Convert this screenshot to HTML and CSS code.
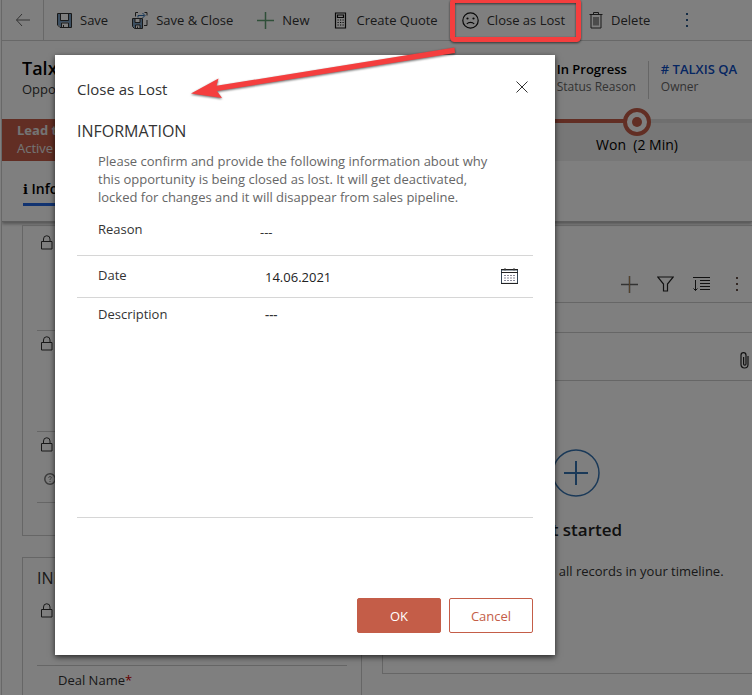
FILE: index.html
```html
<!DOCTYPE html>
<html lang="en">
<head>
<meta charset="utf-8">
<meta name="viewport" content="width=device-width, initial-scale=1">
<title>Close as Lost</title>
<link rel="stylesheet" href="styles.css">
</head>
<body>
<svg class="sprite" aria-hidden="true">
  <symbol id="lock" viewBox="0 0 12 15">
    <path d="M.5 6.500h10.500v7.500H.5zM2.500 6.500V4a3.250 3.250 0 0 1 6.500 0v2.500" fill="none" stroke="currentColor"/>
  </symbol>
</svg>

<div class="app">
  <header class="top">
    <nav class="toolbar" aria-label="Commands">
      <button class="back" type="button" aria-label="Back">
        <svg width="16" height="14" viewBox="0 0 16 14"><path d="M15 7H1.500M7 1 1.500 7 7 13" fill="none" stroke="#666"/></svg>
      </button>
      <button class="cmd" type="button">
        <svg width="15" height="15" viewBox="0 0 15 15"><path d="M1 1h13v13H3.500L1 11.500z" fill="#7ba0c4"/><path d="M3.500 1h8v6h-8z" fill="#fff"/><path d="M4.500 9.500h7V14h-7z" fill="#fff"/><path d="M.5.5h14v14H3L.5 12zM3.500 1v6.500h8V1M4.500 14v-4h7v4M6.500 12v2" fill="none" stroke="#333"/></svg>
        Save
      </button>
      <button class="cmd" type="button">
        <svg width="16" height="17" viewBox="0 0 16 17"><path d="M1 6.500h9V16H2.500L1 14.500z" fill="#7ba0c4"/><path d="M3 7h5v3H3zM3.500 13H8v3H3.500z" fill="#fff"/><path d="M.5 6.500h10v10h-8l-2-2zM3 7v3.500h5V7M3.500 16v-3h4.500v3M5.500 14.500V16" fill="none" stroke="#333"/><path d="M3.500 4.500v-4h2.500M12.500.5h2.500v3M15 8v5.500h-3" fill="none" stroke="#333"/><path d="M6 5.500V3.500h6.500M10.500 1l2.500 2.500L10.500 6" fill="none" stroke="#2b6cb0"/></svg>
        Save &amp; Close
      </button>
      <button class="cmd" type="button">
        <svg width="17" height="17" viewBox="0 0 17 17"><path d="M8.500 0v17M0 8.500h17" stroke="#5f9f72" stroke-width="1.500"/></svg>
        New
      </button>
      <button class="cmd" type="button">
        <svg width="15" height="17" viewBox="0 0 15 17"><path d="M2.500 1h10v15h-10zM4.500 3h6v2.500h-6z" fill="none" stroke="#111" stroke-width="1.200"/><path d="M4.500 8h6.500M4.500 10.500h6.500M4.500 13h6.500" stroke="#111" stroke-width="1.200" stroke-dasharray="1.200 1.300"/></svg>
        Create Quote
      </button>
      <button class="cmd" type="button">
        <svg width="17" height="17" viewBox="0 0 17 17"><circle cx="8.500" cy="8.500" r="7.700" fill="none" stroke="#111" stroke-width="1.200"/><path d="M4.800 12c1.800-2.300 5.600-2.300 7.400 0" fill="none" stroke="#111" stroke-width="1.200"/><circle cx="5.500" cy="6.500" r="1.100" fill="#111"/><circle cx="11.500" cy="6.500" r="1.100" fill="#111"/></svg>
        Close as Lost
      </button>
      <button class="cmd" type="button">
        <svg width="14" height="17" viewBox="0 0 14 17"><path d="M.5 2.500h13M4.500 2.500V.5h5v2M2 2.500v13.500h10V2.500M5 5v8.500M7 5v8.500M9 5v8.500" fill="none" stroke="#333"/></svg>
        Delete
      </button>
      <button class="cmd more" type="button" aria-label="More commands">
        <svg width="4" height="15" viewBox="0 0 4 15"><path d="M1 0h2v2H1zM1 6h2v2H1zM1 12h2v2H1z" fill="#2b5a8c"/></svg>
      </button>
    </nav>

    <div class="record">
      <div class="record-name">
        <h1>Talxis</h1>
        <p>Opportunity</p>
      </div>
      <dl class="facts">
        <div><dd>In Progress</dd><dt>Status Reason</dt></div>
        <div><dd><a href="#owner"># TALXIS QA</a></dd><dt>Owner</dt></div>
      </dl>
    </div>

    <div class="process">
      <div class="process-name"><strong>Lead to Won</strong><span>Active</span></div>
      <div class="stages">
        <div class="stage">
          <svg width="28" height="28" viewBox="0 0 28 28"><circle cx="14" cy="14" r="12" fill="#fff" stroke="#c45d48" stroke-width="4"/><circle cx="14" cy="14" r="5" fill="#c45d48"/></svg>
          <span>Won&nbsp; (2 Min)</span>
        </div>
      </div>
    </div>

    <nav class="tabs" aria-label="Sections"><a href="#info"><b>i</b> Info</a></nav>
  </header>

  <main class="columns">
    <div class="column">
      <section class="card locked">
        <div class="locked-row"><svg class="lock"><use href="#lock"/></svg></div>
        <div class="locked-row"><svg class="lock"><use href="#lock"/></svg></div>
        <div class="locked-row short"><svg class="lock"><use href="#lock"/></svg>
          <svg class="help" width="12" height="12" viewBox="0 0 12 12"><circle cx="6" cy="6" r="5.200" fill="none" stroke="#777" stroke-width="1.500"/><path d="M4.700 4.800c0-1.700 2.600-1.600 2.600-.2C7.300 5.700 6 5.600 6 6.900M6 8v1" fill="none" stroke="#777"/></svg>
        </div>
      </section>
      <section class="card deal">
        <h2>INFORMATION</h2>
        <div class="locked-row"><svg class="lock"><use href="#lock"/></svg></div>
        <p class="deal-name">Deal Name<span>*</span></p>
      </section>
    </div>

    <section class="card timeline">
      <div class="timeline-tools">
        <button type="button" aria-label="Add"><svg width="17" height="17" viewBox="0 0 17 17"><path d="M8.500 0v17M0 8.500h17" stroke="#666" stroke-width="1.500"/><path d="M8.500 0v17" stroke="#a88458"/></svg></button>
        <button type="button" aria-label="Filter"><svg width="17" height="16" viewBox="0 0 17 16"><path d="M.7 1h15.600L10.500 8v7H6.500V8z" fill="none" stroke="#222" stroke-width="1.200"/></svg></button>
        <button type="button" aria-label="Sort"><svg width="17" height="16" viewBox="0 0 17 16"><path d="M0 1.500h17M7 4.500h10M7 7.500h10M7 10.500h10M7 13.500h10M2.500 4v10.500M.5 12.500l2 2 2-2" fill="none" stroke="#222"/></svg></button>
        <button type="button" aria-label="More"><svg width="4" height="15" viewBox="0 0 4 15"><path d="M1 0h2v2H1zM1 6h2v2H1zM1 12h2v2H1z" fill="#665048"/></svg></button>
      </div>
      <div class="timeline-gap"></div>
      <div class="note"><svg width="9" height="17" viewBox="0 0 9 17"><path d="M8 4v8.500a3.500 3.500 0 0 1-7 0V3.200a2.400 2.400 0 0 1 5 0V12a1.200 1.200 0 0 1-2.400 0V5" fill="none" stroke="#222" stroke-width="1.200"/></svg></div>
      <div class="empty">
        <svg width="48" height="48" viewBox="0 0 48 48"><path d="M24 12v24M12 24h24" stroke="#3573b1" stroke-width="2"/><circle cx="24" cy="24" r="23" fill="none" stroke="#3573b1" stroke-width="1.500"/></svg>
        <h2>Get started</h2>
        <p>Capture and manage all records in your timeline.</p>
      </div>
    </section>
  </main>
</div>

<div class="scrim">
  <form class="dialog" role="dialog" aria-labelledby="dialog-title">
    <div class="dialog-head">
      <h2 id="dialog-title">Close as Lost</h2>
      <button type="button" aria-label="Close"><svg width="12" height="12" viewBox="0 0 12 12"><path d="M.5.5l11 11M11.500.5l-11 11" stroke="#333"/></svg></button>
    </div>
    <h3>INFORMATION</h3>
    <p class="hint">Please confirm and provide the following information about why this opportunity is being closed as lost. It will get deactivated, locked for changes and it will disappear from sales pipeline.</p>
    <div class="field reason">
      <label for="reason">Reason</label>
      <input id="reason" type="text" value="---">
    </div>
    <div class="field date">
      <label for="date">Date</label>
      <input id="date" type="text" value="14.06.2021">
      <button type="button" aria-label="Pick a date"><svg width="17" height="16" viewBox="0 0 17 16"><path d="M.5 2h16v13.400H.5z" fill="none" stroke="#345"/><path d="M0 1.500h17M0 4.500h17M0 15.500h17" stroke="#222"/><path d="M4 0v2.500M13 0v2.500" stroke="#444"/><path d="M3 7.500h11M3 10h11M3 12.500h11" stroke="#889" stroke-dasharray="2 1"/></svg></button>
    </div>
    <div class="field description">
      <label for="description">Description</label>
      <textarea id="description">---</textarea>
    </div>
    <div class="actions">
      <button class="primary" type="submit">OK</button>
      <button class="secondary" type="button">Cancel</button>
    </div>
  </form>
</div>

<svg class="callout" width="600" height="110" viewBox="0 0 600 110" aria-hidden="true">
  <rect x="452.500" y=".5" width="126" height="39" rx="2" fill="none" stroke="#f43e3e" stroke-width="5"/>
  <path d="M191 93.500 218.500 78.500 216.500 85.800 454.500 47.500 455 53 217 91 222 98z" fill="#f43e3e"/>
</svg>
</body>
</html>
```

FILE: styles.css
```css
* { box-sizing: border-box; }
html, body { height: 100%; }
body {
  margin: 0;
  position: relative;
  overflow: hidden;
  background: #fff;
  color: #333;
  font: 13px/18px "Open Sans", "Noto Sans", sans-serif;
}
h1, h2, h3, p, dl, dd { margin: 0; font-weight: 400; }
button, input, textarea { font: inherit; color: inherit; border: 0; background: none; padding: 0; margin: 0; }
button { display: inline-flex; align-items: center; justify-content: center; }
svg { display: block; flex: none; }
a { color: inherit; text-decoration: none; }
.sprite { position: absolute; width: 0; height: 0; }

.app { height: 100%; margin-left: 1px; border-left: 1px solid #d0d0d0; overflow: hidden; }
.top { border-bottom: 1px solid #bbb; box-shadow: 0 2px 3px #aaa; }

.toolbar { display: flex; height: 41px; border-bottom: 1px solid #d0d0d0; }
.back { width: 42px; border-right: 1px solid #d0d0d0; }
.cmd { gap: 8px; padding: 0 11px 0 13px; white-space: nowrap; }
.cmd.more { padding-left: 24px; }

.record { display: flex; justify-content: space-between; height: 78px; padding: 16px 15px 0 20px; }
.record-name { width: 48px; overflow: hidden; }
.record-name h1 { color: #000; font-size: 18px; line-height: 22px; font-weight: 600; }
.record-name p { line-height: 20px; }
.facts { display: flex; height: 38px; margin-top: 4px; }
.facts > div { display: flex; flex-direction: column; }
.facts > div + div { margin-left: 12px; padding-left: 12px; border-left: 1px solid #ccc; }
.facts dd { color: #000; font-weight: 600; line-height: 17px; }
.facts dt { color: #666; font-size: 12px; }
.facts a { color: #0b4cc4; }

.process { display: flex; height: 42px; }
.process-name { width: 64px; padding: 2px 0 2px 15px; overflow: hidden; white-space: nowrap; background: #c45d48; color: #e8e8e8; display: flex; flex-direction: column; }
.stages { flex: 1; display: flex; background: linear-gradient(#dedede, #dedede) top / 100% 4px no-repeat #eee; }
.stage { display: flex; flex-direction: column; align-items: center; flex: 1; padding-left: 456px; color: #000; font-size: 14px; font-weight: 500; background: linear-gradient(#c45d48, #c45d48) top left / 566px 4px no-repeat; }
.stage svg { margin-top: -11px; }

.tabs { display: flex; height: 60px; padding: 17px 21px 0; color: #000; }
.tabs a { height: 28px; padding-top: 2px; border-bottom: 3px solid #2266e3; font-size: 14px; font-weight: 600; }
.tabs b { font-family: "DejaVu Serif", serif; font-size: 13px; }

.columns { display: grid; grid-template-columns: 7fr 8fr; gap: 20px; margin: 3px -18px 0 20px; align-items: start; }
.card { border: 1px solid #ccc; }
.column { display: grid; gap: 21px; }
.locked { height: 311px; padding: 4px 14px 0; }
.locked-row { height: 101px; padding: 5px 4px; border-bottom: 1px solid #ccc; }
.locked-row.short { height: 71px; }
.lock { width: 12px; height: 15px; }
.help { margin: 21px 0 0 3px; }
.deal { height: 160px; padding: 9px 14px 0; }
.deal h2 { font-size: 16px; line-height: 22px; }
.deal .locked-row { height: 77px; padding-top: 14px; }
.deal-name { padding: 5px 21px; }
.deal-name span { color: #c00; }

.timeline-tools { display: flex; justify-content: flex-end; height: 77px; padding: 39px 14px 0 0; border-bottom: 1px solid #ccc; }
.timeline-tools button { width: 36px; height: 38px; }
.timeline-gap { height: 30px; border-bottom: 1px solid #ccc; }
.note { display: flex; justify-content: flex-end; height: 48px; padding: 19px 20px 0 0; border-bottom: 1px solid #ccc; }
.empty { display: flex; flex-direction: column; align-items: center; height: 292px; padding-top: 68px; white-space: nowrap; }
.empty h2 { margin-top: 20px; color: #222; font-size: 17px; line-height: 26px; font-weight: 600; }
.empty p { margin-top: 19px; }

.scrim { position: absolute; inset: 0; padding: 55px; background: rgba(0, 0, 0, .5); }
.dialog { display: flex; flex-direction: column; width: 500px; max-width: 100%; height: 600px; padding: 22px; background: #fff; box-shadow: 0 2px 6px rgba(0, 0, 0, .7); }
.dialog-head { display: flex; justify-content: space-between; }
.dialog-head h2 { font-size: 15px; line-height: 24px; }
.dialog-head button { width: 22px; height: 20px; }
.dialog h3 { margin-top: 18px; font-size: 16px; line-height: 24px; }
.hint { margin: 9px 32px 0 21px; color: #666; }
.field { display: grid; grid-template-columns: 162px 1fr auto; align-items: start; padding-left: 21px; border-bottom: 1px solid #d6d6d6; }
.field input { width: 100%; height: 18px; }
.reason { height: 50px; padding-top: 14px; }
.reason input { margin-top: 3px; }
.date { height: 42px; padding-top: 10px; }
.date input { margin-top: 2px; padding-left: 5px; color: #222; }
.date button { margin-right: 15px; height: 20px; }
.description { height: 220px; padding-top: 7px; }
.description textarea { height: 200px; padding-left: 5px; font-weight: 600; resize: none; outline: 0; }
.actions { display: flex; justify-content: flex-end; gap: 8px; margin-top: auto; }
.actions button { width: 84px; height: 35px; border: 1px solid #c45d48; border-radius: 2px; color: #c45d48; }
.actions .primary { background: #c45d48; color: #fff; font-weight: 500; }

.callout { position: absolute; top: 0; left: 0; filter: drop-shadow(0 1px 1px rgba(0, 0, 0, .6)); }
```
